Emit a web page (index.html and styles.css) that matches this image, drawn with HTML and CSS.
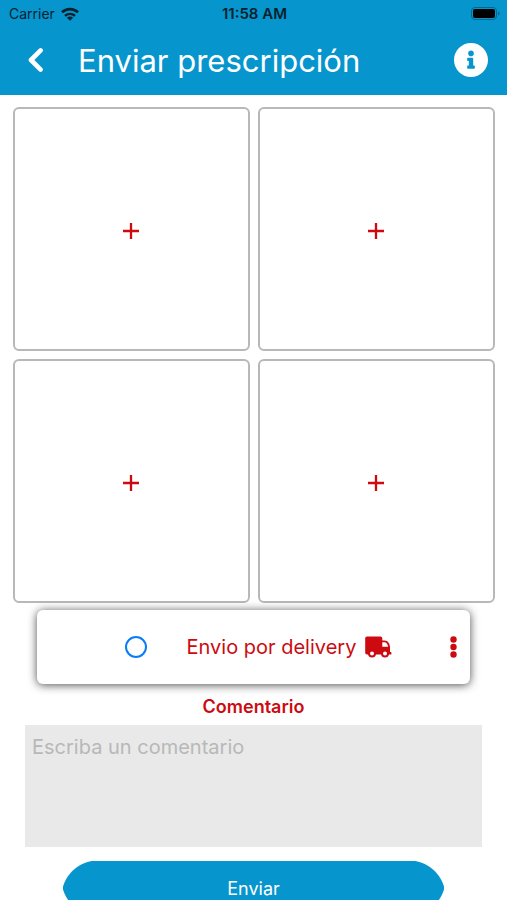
FILE: index.html
```html
<!DOCTYPE html>
<html lang="es">
<head>
    <meta charset="UTF-8">
    <meta name="viewport" content="width=device-width, initial-scale=1.0">
    <title>Enviar prescripción</title>
    <link rel="stylesheet" href="styles.css">
</head>
<body>
    <header class="header">
        <div class="status-bar">
            <div class="carrier">
                <span>Carrier</span>
                <svg width="18" height="14" viewBox="0 0 18 14" fill="none" stroke="#06222e" stroke-width="2.8">
                    <path d="M1 5.300a11.500 11.500 0 0 1 16 0"/>
                    <path d="M4 8.900a7.200 7.200 0 0 1 10 0" stroke-width="2.4"/>
                    <path d="M9 13.800L5.900 10.800a4.400 4.400 0 0 1 6.200 0z" fill="#06222e" stroke="none"/>
                </svg>
            </div>
            <span class="time">11:58 AM</span>
            <svg class="battery" width="29" height="14" viewBox="0 0 29 14">
                <rect x="0.5" y="0.5" width="25" height="12" rx="3.5" fill="none" stroke="#05678c"/>
                <rect x="2" y="2" width="22" height="9" rx="2" fill="#000"/>
                <path d="M27 4.500v4q1.500-.5 1.500-2t-1.500-2z" fill="#05678c"/>
            </svg>
        </div>
        <div class="title-bar">
            <button type="button" class="icon-btn" aria-label="Volver">
                <svg width="16" height="26" viewBox="0 0 16 26" fill="none" stroke="#fff" stroke-width="4.6" stroke-linecap="round" stroke-linejoin="round">
                    <path d="M12.600 3.400L3 13l9.600 9.600"/>
                </svg>
            </button>
            <h1>Enviar prescripción</h1>
            <button type="button" class="icon-btn" aria-label="Información">
                <svg width="34" height="34" viewBox="8 8 496 496" fill="#fff">
                    <path d="M256 8C119.043 8 8 119.083 8 256c0 136.997 111.043 248 248 248s248-111.003 248-248C504 119.083 392.957 8 256 8zm0 110c23.196 0 42 18.804 42 42s-18.804 42-42 42-42-18.804-42-42 18.804-42 42-42zm56 254c0 6.627-5.373 12-12 12h-88c-6.627 0-12-5.373-12-12v-24c0-6.627 5.373-12 12-12h12v-64h-12c-6.627 0-12-5.373-12-12v-24c0-6.627 5.373-12 12-12h64c6.627 0 12 5.373 12 12v100h12c6.627 0 12 5.373 12 12v24z"/>
                </svg>
            </button>
        </div>
    </header>

    <main>
        <div class="photos">
            <button type="button" class="photo" aria-label="Agregar foto 1">
                <svg width="16" height="16" viewBox="0 0 16 16"><path d="M8 0v16M0 8h16"/></svg>
            </button>
            <button type="button" class="photo" aria-label="Agregar foto 2">
                <svg width="16" height="16" viewBox="0 0 16 16"><path d="M8 0v16M0 8h16"/></svg>
            </button>
            <button type="button" class="photo" aria-label="Agregar foto 3">
                <svg width="16" height="16" viewBox="0 0 16 16"><path d="M8 0v16M0 8h16"/></svg>
            </button>
            <button type="button" class="photo" aria-label="Agregar foto 4">
                <svg width="16" height="16" viewBox="0 0 16 16"><path d="M8 0v16M0 8h16"/></svg>
            </button>
        </div>

        <form class="form">
            <div class="delivery">
                <label class="delivery-option">
                    <input type="radio" name="envio" value="delivery">
                    <span>Envio por delivery</span>
                    <svg width="27" height="22" viewBox="0 0 27 22">
                        <path fill="#cc0a10" d="M2 0.500h13.500a1.800 1.800 0 0 1 1.800 1.800v2.200h2.200c3.500 0 5.500 3.500 5.500 7v4.500h.8a.6.6 0 0 1 .6.6v1.300a.6.6 0 0 1-.6.6H2A1.800 1.800 0 0 1 .2 16.700V2.300A1.800 1.800 0 0 1 2 .5z"/>
                        <path fill="#fff" d="M17.300 6.300h2c2.100 0 3.500 2 3.800 4.400h-5.800z"/>
                        <circle cx="7" cy="17.500" r="3" fill="#fff" stroke="#cc0a10" stroke-width="2"/>
                        <circle cx="20" cy="17.500" r="3" fill="#fff" stroke="#cc0a10" stroke-width="2"/>
                    </svg>
                </label>
                <button type="button" class="icon-btn menu-btn" aria-label="Opciones">
                    <svg width="7" height="22" viewBox="0 0 7 22" fill="#cc0a10">
                        <circle cx="3.500" cy="3.500" r="3.200"/>
                        <circle cx="3.500" cy="11" r="3.200"/>
                        <circle cx="3.500" cy="18.500" r="3.200"/>
                    </svg>
                </button>
            </div>

            <label class="comment-label" for="comentario">Comentario</label>
            <textarea id="comentario" class="comment" placeholder="Escriba un comentario"></textarea>
            <button type="submit" class="send-btn">Enviar</button>
        </form>
    </main>
</body>
</html>
```
FILE: styles.css
```css
* {
    box-sizing: border-box;
}
html {
    scrollbar-width: none;
}
body {
    margin: 0;
    min-height: 100vh;
    background-color: #fff;
    font-family: Inter, "Liberation Sans", sans-serif;
}
svg {
    display: block;
}
button {
    padding: 0;
    border: none;
    font-family: inherit;
    cursor: pointer;
}
.header {
    background-color: #0695cd;
}
.status-bar {
    display: grid;
    grid-template-columns: 1fr auto 1fr;
    align-items: center;
    height: 27px;
    padding: 0 7px 0 9px;
    color: #06222e;
    font-size: 14px;
}
.carrier {
    display: flex;
    align-items: center;
    gap: 6px;
}
.time {
    font-size: 15px;
    font-weight: 600;
}
.battery {
    justify-self: end;
}
.title-bar {
    display: flex;
    align-items: center;
    height: 68px;
    padding: 0 19px 2px 28px;
}
.title-bar h1 {
    flex: 1;
    margin: 0 0 0 34px;
    color: #fff;
    font-size: 31px;
    font-weight: 400;
}
.icon-btn {
    background: none;
}
.photos {
    display: grid;
    grid-template-columns: 1fr 1fr;
    gap: 8px;
    padding: 12px 12px 7px 13px;
}
.photo {
    display: flex;
    align-items: center;
    justify-content: center;
    height: 244px;
    padding: 4px 2px 0 0;
    background-color: #fff;
    border: 2px solid #b8b8b8;
    border-radius: 6px;
}
.photo path {
    fill: none;
    stroke: #cc0a10;
    stroke-width: 2.3;
}
.form {
    display: flex;
    flex-direction: column;
    padding: 0 25px 12px;
}
.delivery {
    display: flex;
    align-items: center;
    height: 74px;
    margin: 0 12px;
    padding-right: 13px;
    background-color: #fff;
    border-radius: 6px;
    box-shadow: 0 1px 10px rgba(0, 0, 0, 0.7);
}
.delivery-option {
    flex: 1;
    display: flex;
    align-items: center;
    justify-content: center;
    padding-left: 30px;
    color: #cc0a10;
    font-size: 20px;
}
.delivery-option input {
    appearance: none;
    width: 22px;
    height: 22px;
    margin: 0 40px 0 0;
    border: 2px solid #0a7cf5;
    border-radius: 50%;
}
.delivery-option input:checked {
    background-color: #0a7cf5;
    box-shadow: inset 0 0 0 3px #fff;
}
.delivery-option svg {
    margin-left: 9px;
}
.comment-label {
    padding: 12px 0 7px;
    color: #cc0a10;
    font-size: 18px;
    font-weight: 600;
    line-height: 22px;
    text-align: center;
}
.comment {
    height: 122px;
    padding: 10px 7px;
    background-color: #e9e9e9;
    border: none;
    border-radius: 0;
    color: #333;
    font-family: inherit;
    font-size: 20px;
    resize: none;
}
.comment::placeholder {
    color: #b8b8b8;
}
.send-btn {
    height: 54px;
    margin: 14px 38px 0;
    /* round caps that meet in a point halfway down */
    background:
        radial-gradient(circle at 35px 36px, #0695cd 36px, transparent 37px) left top / 35px 27px no-repeat,
        radial-gradient(circle at 35px -9px, #0695cd 36px, transparent 37px) left bottom / 35px 27px no-repeat,
        radial-gradient(circle at 0 36px, #0695cd 36px, transparent 37px) right top / 35px 27px no-repeat,
        radial-gradient(circle at 0 -9px, #0695cd 36px, transparent 37px) right bottom / 35px 27px no-repeat,
        linear-gradient(#0695cd, #0695cd) center / calc(100% - 70px) 100% no-repeat;
    color: #fff;
    font-size: 18px;
}
```
